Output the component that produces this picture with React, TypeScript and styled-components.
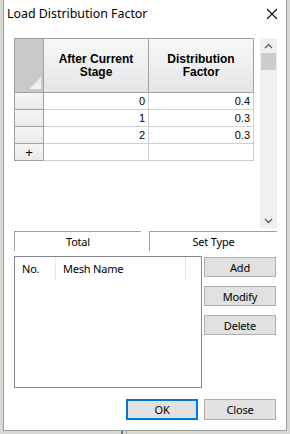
import React from 'react';
import styled, { createGlobalStyle } from 'styled-components';

const GlobalStyle = createGlobalStyle`
  html, body {
    margin: 0;
    padding: 0;
  }
  body {
    width: 290px;
    height: 434px;
    overflow: hidden;
    background: #d6dad3;
    font-family: "Noto Sans", "Open Sans", sans-serif;
    font-size: 11px;
    color: #000;
  }
  * {
    box-sizing: border-box;
  }
`;

const Screen = styled.div`
  display: flex;
  flex-direction: column;
  width: 290px;
  height: 434px;
`;

const WindowRow = styled.div`
  display: flex;
  padding-left: 3px;
`;

const Dialog = styled.div`
  width: 284px;
  height: 431px;
  background: #fff;
  border: 1px solid #98a298;
  border-top: none;
  display: flex;
  flex-direction: column;
`;

const BottomStrip = styled.div`
  display: flex;
  height: 3px;
  padding-left: 121px;
  gap: 3px;
`;

const BackLine = styled.div<{ $w: number; $c: string }>`
  width: ${p => p.$w}px;
  background: ${p => p.$c};
`;

const TitleBar = styled.div`
  height: 26px;
  display: flex;
  align-items: center;
  justify-content: space-between;
  padding: 0 8px 0 3px;
`;

const Title = styled.span`
  font-size: 12.4px;
  padding-top: 1px;
`;

const CloseBox = styled.span`
  display: flex;
  width: 12px;
  height: 12px;
  margin-top: 2px;
`;

const Body = styled.div`
  display: flex;
  flex-direction: column;
  padding: 0 9px 0 10px;
  margin-top: 12px;
`;

const GridArea = styled.div`
  display: flex;
  height: 190px;
`;

const TableWrap = styled.div`
  width: 246px;
`;

const Table = styled.div`
  display: grid;
  grid-template-columns: 30px 105px 105px;
  grid-template-rows: 55px repeat(4, 17px);
  font-family: "Liberation Sans", Arial, sans-serif;
`;

const Corner = styled.div`
  border: 1px solid #a0a0a0;
  background: #c9c9c9;
  display: flex;
  align-items: flex-end;
  justify-content: flex-end;
  padding: 0 2px 3px 0;
`;

const HeadCell = styled.div`
  border-top: 1px solid #a0a0a0;
  border-right: 1px solid #a0a0a0;
  border-bottom: 1px solid #a0a0a0;
  background: linear-gradient(#f8f8f8, #e3e5e8);
  display: flex;
  align-items: center;
  justify-content: center;
  text-align: center;
  font-weight: bold;
  font-size: 12px;
  line-height: 13px;
  padding-top: 1px;
`;

const RowHead = styled.div`
  border-left: 1px solid #a0a0a0;
  border-right: 1px solid #a0a0a0;
  border-bottom: 1px solid #a0a0a0;
  background: linear-gradient(#f6f6f6, #e9e9e9);
  display: flex;
  align-items: center;
  justify-content: center;
  font-size: 13px;
`;

const Cell = styled.div`
  border-right: 1px solid #c9d0d7;
  border-bottom: 1px solid #c9d0d7;
  display: flex;
  align-items: center;
  justify-content: flex-end;
  padding-right: 3px;
  font-size: 11px;
`;

const ScrollBar = styled.div`
  width: 17px;
  background: #f0f0f0;
  display: flex;
  flex-direction: column;
  align-items: center;
`;

const ArrowBox = styled.div`
  width: 17px;
  height: 15px;
  display: flex;
  align-items: center;
  justify-content: center;
`;

const Thumb = styled.div`
  width: 15px;
  height: 17px;
  background: #cdcdcd;
`;

const Track = styled.div`
  flex: 1;
`;

const TabRow = styled.div`
  display: flex;
  gap: 8px;
  margin-top: 3px;
  height: 20px;
`;

const Tab = styled.div<{ $w: number }>`
  width: ${p => p.$w}px;
  border-top: 1px solid #a0a0a0;
  border-left: 1px solid #a0a0a0;
  display: flex;
  align-items: center;
  justify-content: center;
  letter-spacing: -0.2px;
`;

const Lower = styled.div`
  display: flex;
  margin-top: 5px;
  gap: 2px;
`;

const ListBox = styled.div`
  width: 188px;
  height: 132px;
  border: 1px solid #828790;
`;

const ListHeader = styled.div`
  display: flex;
  height: 23px;
`;

const ListCol = styled.div<{ $w: number }>`
  width: ${p => p.$w}px;
  border-right: 1px solid #e5e5e5;
  display: flex;
  align-items: center;
  padding-left: 7px;
  letter-spacing: -0.2px;
`;

const SideButtons = styled.div`
  display: flex;
  flex-direction: column;
  gap: 9px;
  margin-top: 1px;
`;

const Button = styled.button<{ $primary?: boolean; $h?: number }>`
  width: 72px;
  height: ${p => p.$h ?? 20}px;
  background: #e1e1e1;
  border: ${p => (p.$primary ? '2px solid #0078d7' : '1px solid #adadad')};
  font-family: "Noto Sans", "Open Sans", sans-serif;
  font-size: 11px;
  letter-spacing: -0.2px;
  color: #000;
  padding: 0;
  line-height: 1;
`;

const Footer = styled.div`
  display: flex;
  justify-content: flex-end;
  gap: 6px;
  margin-top: 11px;
  padding-right: 1px;
`;

const Chevron = ({ up }: { up?: boolean }) => (
  <svg width="9" height="6" viewBox="0 0 9 6">
    <path
      d={up ? 'M1 5 L4.5 1.5 L8 5' : 'M1 1 L4.5 4.5 L8 1'}
      fill="none"
      stroke="#606060"
      strokeWidth="1.4"
    />
  </svg>
);

const rows = [
  { stage: '0', factor: '0.4' },
  { stage: '1', factor: '0.3' },
  { stage: '2', factor: '0.3' },
];

export default function App() {
  return (
    <Screen>
      <GlobalStyle />
      <WindowRow>
        <Dialog>
          <TitleBar>
            <Title>Load Distribution Factor</Title>
            <CloseBox>
              <svg width="12" height="12" viewBox="0 0 12 12">
                <path d="M1 1 L11 11 M11 1 L1 11" stroke="#111" strokeWidth="1.1" />
              </svg>
            </CloseBox>
          </TitleBar>
          <Body>
            <GridArea>
              <TableWrap>
                <Table>
                  <Corner>
                    <svg width="12" height="12" viewBox="0 0 12 12">
                      <defs>
                        <linearGradient id="tri" x1="0" y1="0" x2="1" y2="1">
                          <stop offset="0" stopColor="#dcdcdc" />
                          <stop offset="1" stopColor="#fafafa" />
                        </linearGradient>
                      </defs>
                      <path d="M12 0 L12 12 L0 12 Z" fill="url(#tri)" />
                    </svg>
                  </Corner>
                  <HeadCell>
                    After Current
                    <br />
                    Stage
                  </HeadCell>
                  <HeadCell>
                    Distribution
                    <br />
                    Factor
                  </HeadCell>
                  {rows.map(r => (
                    <React.Fragment key={r.stage}>
                      <RowHead />
                      <Cell>{r.stage}</Cell>
                      <Cell>{r.factor}</Cell>
                    </React.Fragment>
                  ))}
                  <RowHead>+</RowHead>
                  <Cell />
                  <Cell />
                </Table>
              </TableWrap>
              <ScrollBar>
                <ArrowBox>
                  <Chevron up />
                </ArrowBox>
                <Thumb />
                <Track />
                <ArrowBox>
                  <Chevron />
                </ArrowBox>
              </ScrollBar>
            </GridArea>
            <TabRow>
              <Tab $w={127}>Total</Tab>
              <Tab $w={128}>Set Type</Tab>
            </TabRow>
            <Lower>
              <ListBox>
                <ListHeader>
                  <ListCol $w={41}>No.</ListCol>
                  <ListCol $w={130}>Mesh Name</ListCol>
                </ListHeader>
              </ListBox>
              <SideButtons>
                <Button>Add</Button>
                <Button>Modify</Button>
                <Button>Delete</Button>
              </SideButtons>
            </Lower>
            <Footer>
              <Button $primary $h={21}>OK</Button>
              <Button $h={21}>Close</Button>
            </Footer>
          </Body>
        </Dialog>
      </WindowRow>
      <BottomStrip>
        <BackLine $w={2} $c="#737873" />
        <BackLine $w={1} $c="#a3a8a2" />
      </BottomStrip>
    </Screen>
  );
}
